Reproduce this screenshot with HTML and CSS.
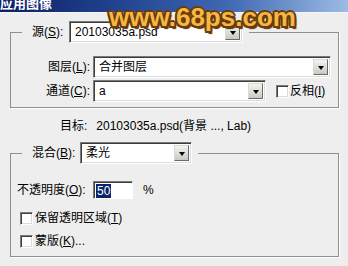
FILE: index.html
```html
<!DOCTYPE html>
<html lang="zh">
<head>
<meta charset="utf-8">
<title>应用图像</title>
<link rel="stylesheet" href="styles.css">
</head>
<body>
<div class="titlebar"><span class="title">应用图像</span></div>
<div class="watermark">www.68ps.com</div>
<div class="dialog">
  <fieldset class="group g1">
    <legend class="legend">
      <span class="lg-label src-label">源(<u>S</u>):</span>
      <span class="combo w-src"><span class="combo-text">20103035a.psd</span><span class="combo-btn"><i class="tri"></i></span></span>
    </legend>
    <div class="rows">
      <span class="row-label">图层(<u>L</u>):</span>
      <span class="combo w-layer"><span class="combo-text">合并图层</span><span class="combo-btn"><i class="tri"></i></span></span>
      <span class="row-label">通道(<u>C</u>):</span>
      <span class="row-ctrl">
        <span class="combo w-chan"><span class="combo-text">a</span><span class="combo-btn"><i class="tri"></i></span></span>
        <span class="check invert"><span class="box"></span><span>反相(<u>I</u>)</span></span>
      </span>
    </div>
  </fieldset>
  <div class="target"><span class="t-label">目标:</span><span class="t-value">20103035a.psd(背景 ..., Lab)</span></div>
  <fieldset class="group g2">
    <legend class="legend">
      <span class="lg-label blend-label">混合(<u>B</u>):</span>
      <span class="combo w-blend"><span class="combo-text">柔光</span><span class="combo-btn"><i class="tri"></i></span></span>
    </legend>
    <div class="opacity">
      <span class="op-label">不透明度(<u>O</u>):</span>
      <span class="field"><span class="sel">50</span></span>
      <span class="pct">%</span>
    </div>
    <div class="check c1"><span class="box"></span><span>保留透明区域(<u>T</u>)</span></div>
    <div class="check c2"><span class="box"></span><span>蒙版(<u>K</u>)...</span></div>
  </fieldset>
</div>
</body>
</html>
```
FILE: styles.css
```css
* { box-sizing: border-box; }
html, body { margin: 0; padding: 0; }
body {
  width: 348px;
  height: 266px;
  overflow: hidden;
  background: #eeeeee;
  color: #000;
  font-family: "Liberation Sans", "Noto Sans CJK SC", sans-serif;
  font-size: 12px;
  line-height: 14px;
  position: relative;
}
u { text-decoration: underline; text-underline-offset: 1px; }

.titlebar {
  height: 13px;
  background: linear-gradient(to right, #0c1f63 0%, #1f3f8c 30%, #3f68b2 65%, #9cbbe4 100%);
  border-bottom: 1px solid #f6f6f6;
  overflow: hidden;
}
.title {
  display: block;
  margin-top: -4px;
  color: #fff;
  font-weight: bold;
  font-size: 13px;
  line-height: 16px;
}

.watermark {
  position: absolute;
  left: 109px;
  top: 2px;
  font-family: "Liberation Sans", sans-serif;
  font-weight: bold;
  font-size: 26px;
  line-height: 30px;
  letter-spacing: 0;
  color: #f4b843;
  text-shadow:
    2px 0 0 #6a3b0c, -2px 0 0 #6a3b0c, 0 2px 0 #6a3b0c, 0 -2px 0 #6a3b0c,
    1.5px 1.5px 0 #6a3b0c, -1.5px -1.5px 0 #6a3b0c, 1.5px -1.5px 0 #6a3b0c, -1.5px 1.5px 0 #6a3b0c,
    2px 3px 1px #4a2a08;
}

.dialog { padding: 8px 9px 0 10px; }

.group {
  margin: 0;
  border: 1px solid #8f8f8f;
  box-shadow: 1px 1px 0 #fff;
  padding: 0 6px 0 6px;
  min-width: 0;
}
.legend {
  display: flex;
  align-items: center;
  margin-left: 5px;
  padding: 0 6px 0 10px;
  height: 22px;
  background: #eeeeee;
}
.lg-label { white-space: nowrap; }
.src-label { width: 37px; }
.blend-label { width: 48px; }

.combo {
  display: flex;
  align-items: center;
  height: 22px;
  background: #fff;
  border: 1px solid;
  border-color: #7a7a7a #ffffff #ffffff #7a7a7a;
  box-shadow: inset 1px 1px 0 #3c3c3c, inset -1px -1px 0 #dcdcdc;
  padding: 2px;
}
.combo-text { flex: 1; padding-left: 3px; white-space: nowrap; overflow: hidden; }
.combo-btn {
  width: 15px;
  height: 16px;
  display: flex;
  align-items: center;
  justify-content: center;
  border: 1px solid #8c8c8c;
  border-color: #d8d8d8 #6a6a6a #6a6a6a #d8d8d8;
  background: linear-gradient(#f4f4f0, #c9c9c2);
}
.tri {
  display: block;
  width: 0; height: 0;
  border-left: 3.5px solid transparent;
  border-right: 3.5px solid transparent;
  border-top: 4px solid #000;
  margin-top: 1px;
}

.w-src { width: 174px; }
.w-layer { width: 238px; }
.w-chan { width: 173px; }
.w-blend { width: 112px; }

.g1 { padding-top: 13px; padding-bottom: 5px; }
.rows {
  display: grid;
  grid-template-columns: 73px auto;
  column-gap: 3px;
  row-gap: 2px;
  align-items: center;
}
.row-label { text-align: right; white-space: nowrap; }
.row-ctrl { display: flex; align-items: center; }

.check { display: flex; align-items: center; gap: 2px; white-space: nowrap; }
.box {
  display: block;
  width: 13px; height: 13px;
  background: #fff;
  border: 1px solid;
  border-color: #7a7a7a #ffffff #ffffff #7a7a7a;
  box-shadow: inset 1px 1px 0 #404040, inset -1px -1px 0 #dcdcdc;
}
.invert { margin-left: 10px; gap: 1px; }

.target {
  display: flex;
  gap: 9px;
  padding-left: 50px;
  margin-top: 11px;
  margin-bottom: 9px;
  white-space: nowrap;
}

.g2 { padding-top: 17px; padding-bottom: 8px; }
.opacity { display: flex; align-items: center; height: 18px; }
.op-label { width: 76px; white-space: nowrap; }
.field {
  width: 40px;
  height: 18px;
  background: #fff;
  border: 1px solid;
  border-color: #7a7a7a #ffffff #ffffff #7a7a7a;
  box-shadow: inset 1px 1px 0 #3c3c3c;
  padding: 2px 0 0 2px;
  display: flex;
  align-items: flex-start;
}
.sel { background: #0a246a; color: #fff; padding: 0 1px; line-height: 14px; }
.pct { margin-left: 10px; }
.c1 { margin-top: 12px; margin-left: 3px; }
.c2 { margin-top: 9px; margin-left: 3px; }
```
